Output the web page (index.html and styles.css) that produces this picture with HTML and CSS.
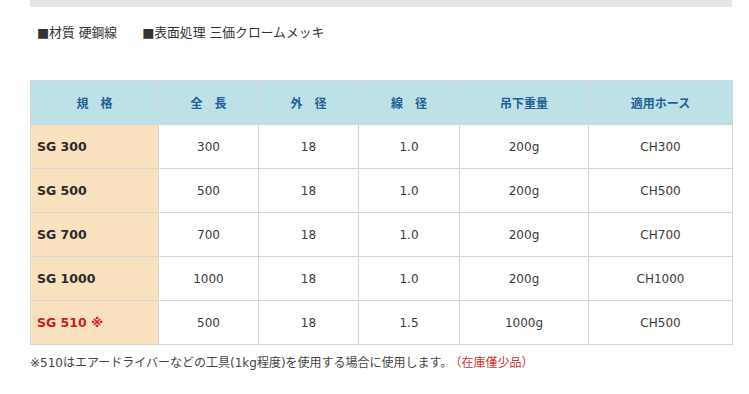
FILE: index.html
```html
<!DOCTYPE html>
<html lang="ja">
<head>
<meta charset="utf-8">
<link rel="stylesheet" href="styles.css">
</head>
<body>
<div class="page">
  <div class="topbar"></div>
  <p class="spec"><span class="spec-item">■材質 硬鋼線</span><span class="spec-item">■表面処理 三価クロームメッキ</span></p>
  <table class="spec-table">
    <colgroup>
      <col class="c1"><col class="c2"><col class="c3"><col class="c4"><col class="c5"><col class="c6">
    </colgroup>
    <thead>
      <tr>
        <th>規　格</th>
        <th>全　長</th>
        <th>外　径</th>
        <th>線　径</th>
        <th>吊下重量</th>
        <th>適用ホース</th>
      </tr>
    </thead>
    <tbody>
      <tr><td class="name">SG 300</td><td>300</td><td>18</td><td>1.0</td><td>200g</td><td>CH300</td></tr>
      <tr><td class="name">SG 500</td><td>500</td><td>18</td><td>1.0</td><td>200g</td><td>CH500</td></tr>
      <tr><td class="name">SG 700</td><td>700</td><td>18</td><td>1.0</td><td>200g</td><td>CH700</td></tr>
      <tr><td class="name">SG 1000</td><td>1000</td><td>18</td><td>1.0</td><td>200g</td><td>CH1000</td></tr>
      <tr><td class="name red">SG 510 ※</td><td>500</td><td>18</td><td>1.5</td><td>1000g</td><td>CH500</td></tr>
    </tbody>
  </table>
  <p class="note">※510はエアードライバーなどの工具(1kg程度)を使用する場合に使用します。<span class="note-red">（在庫僅少品）</span></p>
</div>
</body>
</html>
```

FILE: styles.css
```css
html, body {
  margin: 0;
  padding: 0;
  background: #ffffff;
}
body {
  font-family: "DejaVu Sans", "Noto Sans CJK JP", sans-serif;
  color: #333333;
}
.page {
  padding-left: 30px;
  width: 702px;
}
.topbar {
  height: 7px;
  background: #e6e6e6;
}
.spec {
  margin: 17px 0 0 0;
  padding-left: 7px;
  font-size: 12.8px;
  line-height: 18px;
  color: #333333;
  display: flex;
  gap: 25px;
}
.spec-table {
  margin-top: 38px;
  width: 702px;
  border-collapse: collapse;
  table-layout: fixed;
  border: 1px solid #d6d6d6;
}
.c1 { width: 128px; }
.c2 { width: 100px; }
.c3 { width: 100px; }
.c4 { width: 101px; }
.c5 { width: 129px; }
.c6 { width: 144px; }
.spec-table th,
.spec-table td {
  border: 1px solid #d6d6d6;
  height: 43px;
  padding: 0;
  text-align: center;
  vertical-align: middle;
  font-size: 12px;
}
.spec-table th {
  background: #bee0e7;
  color: #215f93;
  font-weight: bold;
}
.spec-table td {
  color: #3a3a3a;
}
.spec-table td.name {
  background: #f9e0bf;
  text-align: left;
  padding-left: 6px;
  font-weight: bold;
  font-size: 12.5px;
  color: #2a2a2a;
}
.spec-table td.red {
  color: #c8201e;
}
.note {
  margin: 10px 0 0 0;
  font-size: 12px;
  line-height: 17px;
  color: #444444;
}
.note-red {
  margin-left: 3px;
  color: #d0322c;
}
```
